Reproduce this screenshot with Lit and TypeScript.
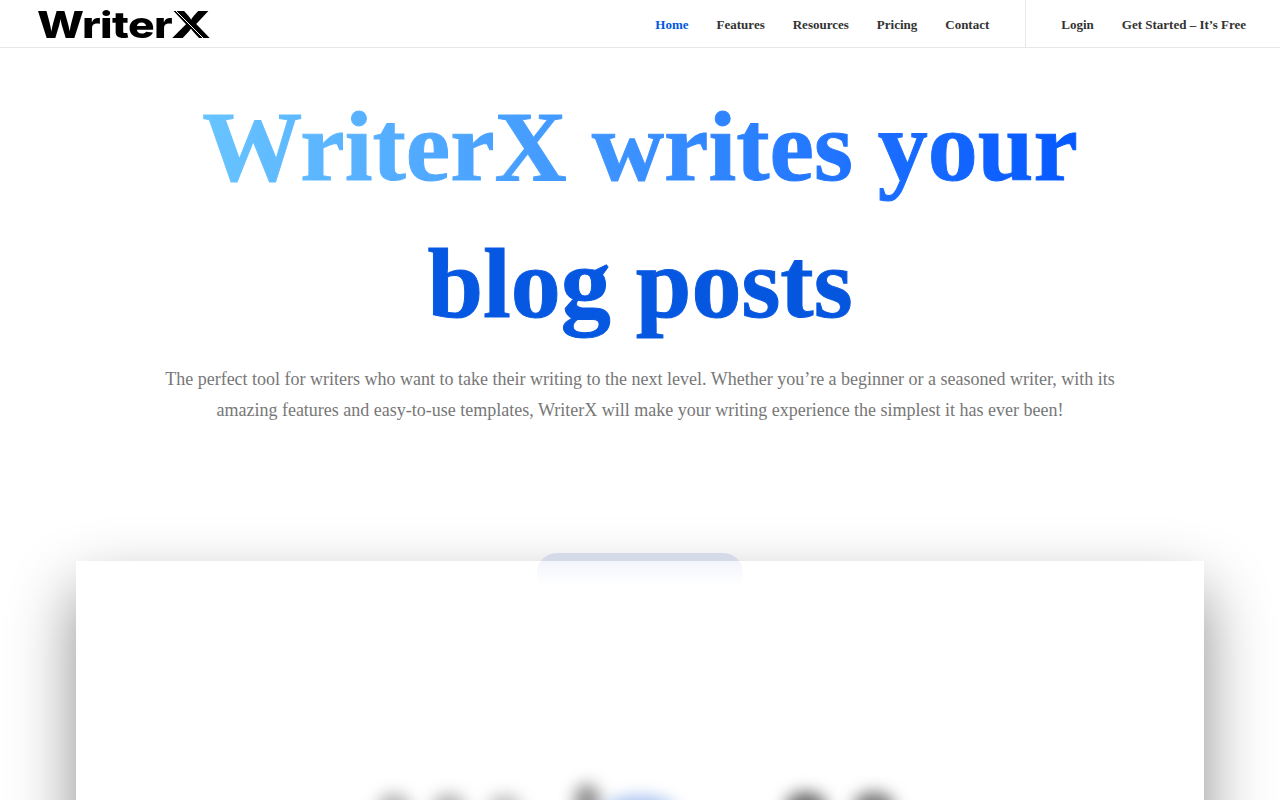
import { LitElement, html, css } from "lit";
import { customElement } from "lit/decorators.js";

const BLOBS = [
  { x: 394, y: 808, w: 34, h: 28, c: "rgba(70,70,70,.42)" },
  { x: 449, y: 808, w: 34, h: 28, c: "rgba(70,70,70,.42)" },
  { x: 505, y: 809, w: 34, h: 28, c: "rgba(70,70,70,.36)" },
  { x: 587, y: 802, w: 26, h: 36, c: "rgba(50,50,50,.55)" },
  { x: 640, y: 812, w: 74, h: 32, c: "rgba(90,140,225,.55)" },
  { x: 806, y: 808, w: 42, h: 32, c: "rgba(30,30,30,.68)" },
  { x: 874, y: 808, w: 42, h: 32, c: "rgba(30,30,30,.62)" },
];

@customElement("app-root")
export class AppRoot extends LitElement {
  static styles = css`
    :host {
      display: block;
      width: 1280px;
      height: 800px;
      overflow: hidden;
      background: #fff;
      font-family: "Liberation Serif", "Times New Roman", serif;
    }
    .header {
      height: 47px;
      border-bottom: 1px solid #e8e8e8;
      display: flex;
      align-items: stretch;
      justify-content: space-between;
      padding: 0 34px 0 37px;
    }
    .logo {
      position: relative;
      display: flex;
      height: 47px;
    }
    .logo span {
      font-family: "Inter", sans-serif;
      font-size: 37px;
      font-weight: 800;
      letter-spacing: -0.5px;
      line-height: 49px;
      color: #000;
      display: block;
      transform-origin: left center;
      white-space: nowrap;
    }
    .wm { width: 134px; transform: scaleX(1.2); }
    .xm { width: 38px; transform: scaleX(1.42); }
    .logo svg {
      position: absolute;
      left: 135px;
      top: 11px;
      width: 38px;
      height: 27px;
    }
    .right { display: flex; align-items: stretch; }
    .nav { display: flex; align-items: center; gap: 28px; padding: 2px 36px 0 0; }
    .actions {
      display: flex;
      align-items: center;
      gap: 28px;
      padding: 2px 0 0 35px;
      border-left: 1px solid #e8e8e8;
    }
    a {
      font-size: 13px;
      font-weight: 700;
      color: #333;
      text-decoration: none;
      white-space: nowrap;
    }
    a.active { color: #0057e0; }
    .hero {
      display: flex;
      flex-direction: column;
      align-items: center;
      padding-top: 30px;
    }
    h1 {
      margin: 0;
      display: flex;
      flex-direction: column;
      align-items: center;
      font-size: 100px;
      line-height: 137px;
      font-weight: 700;
    }
    h1 span {
      -webkit-background-clip: text;
      background-clip: text;
      color: transparent;
      white-space: nowrap;
      -webkit-text-stroke: 1px transparent;
    }
    .l1 { background-image: linear-gradient(90deg, #68c4ff 0%, #3a90ff 50%, #1a6dff 78%, #0558ff 100%); }
    .l2 { background-image: linear-gradient(90deg, #0658e2, #0556df); }
    .sub {
      margin: 12px 0 0;
      width: 960px;
      text-align: center;
      font-size: 18px;
      line-height: 31px;
      color: #777;
    }
    .stage {
      position: relative;
      margin: 135px auto 0;
      width: 1128px;
      height: 400px;
      background: #fff;
      box-shadow: 0 30px 60px rgba(0, 0, 0, 0.45);
    }
    .tab {
      position: absolute;
      left: 461px;
      top: -8px;
      width: 206px;
      height: 32px;
      border-radius: 20px 20px 0 0;
      background: linear-gradient(#d5dae9 0, #d5dae9 8px, #f3f5fb 8px, #ffffff 100%);
    }
    .blob {
      position: absolute;
      border-radius: 50%;
      filter: blur(8px);
    }
  `;

  render() {
    return html`
      <header class="header">
        <div class="logo">
          <span class="wm">Writer</span><span class="xm">X</span>
          <svg viewBox="0 0 38 27"><path d="M4 0 L31 27" stroke="#fff" stroke-width="1" fill="none"/></svg>
        </div>
        <div class="right">
          <nav class="nav">
            <a class="active" href="#">Home</a>
            <a href="#">Features</a>
            <a href="#">Resources</a>
            <a href="#">Pricing</a>
            <a href="#">Contact</a>
          </nav>
          <div class="actions">
            <a href="#">Login</a>
            <a href="#">Get Started – It’s Free</a>
          </div>
        </div>
      </header>
      <section class="hero">
        <h1><span class="l1">WriterX writes your</span><span class="l2">blog posts</span></h1>
        <p class="sub">The perfect tool for writers who want to take their writing to the next level. Whether you’re a beginner or a seasoned writer, with its amazing features and easy-to-use templates, WriterX will make your writing experience the simplest it has ever been!</p>
      </section>
      <div class="stage">
        <div class="tab"></div>
        ${BLOBS.map(
          (b) => html`<div
            class="blob"
            style="left:${b.x - 76 - b.w / 2}px;top:${b.y - 561 - b.h / 2}px;width:${b.w}px;height:${b.h}px;background:${b.c}"
          ></div>`
        )}
      </div>
    `;
  }
}
